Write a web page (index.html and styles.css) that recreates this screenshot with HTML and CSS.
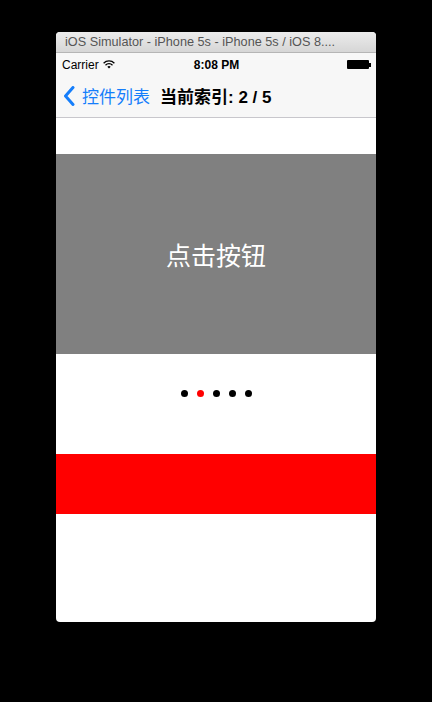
FILE: index.html
```html
<!DOCTYPE html>
<html lang="zh">
<head>
    <meta charset="UTF-8">
    <meta name="viewport" content="width=device-width, initial-scale=1.0">
    <title>当前索引</title>
    <link rel="stylesheet" href="styles.css">
</head>
<body>
    <div class="sim-window">
        <div class="title-bar">iOS Simulator - iPhone 5s - iPhone 5s / iOS 8....</div>

        <div class="status-bar">
            <div class="status-left">
                Carrier
                <svg class="wifi" width="12" height="9" viewBox="0 0 12 9">
                    <path d="M0.6 3.2 A7.6 7.6 0 0 1 11.4 3.2" fill="none" stroke="#000" stroke-width="1.3"/>
                    <path d="M2.5 5.2 A4.8 4.8 0 0 1 9.5 5.2" fill="none" stroke="#000" stroke-width="1.3"/>
                    <path d="M6 8.6 L4.3 6.8 A2.4 2.4 0 0 1 7.7 6.8 Z" fill="#000"/>
                </svg>
            </div>
            <div class="status-time">8:08 PM</div>
            <div class="status-right">
                <span class="battery"></span><span class="battery-nub"></span>
            </div>
        </div>

        <nav class="nav-bar">
            <a href="#" class="back-link">
                <svg width="12" height="20" viewBox="0 0 12 20">
                    <polyline points="10,1.5 2.5,10 10,18.5" fill="none" stroke="#157efb" stroke-width="3" stroke-linecap="round" stroke-linejoin="round"/>
                </svg>
                <span>控件列表</span>
            </a>
            <div class="nav-title">当前索引: 2 / 5</div>
        </nav>

        <div class="content">
            <div class="banner">点击按钮</div>
            <div class="dots">
                <span class="dot"></span>
                <span class="dot active"></span>
                <span class="dot"></span>
                <span class="dot"></span>
                <span class="dot"></span>
            </div>
            <div class="red-band"></div>
        </div>
    </div>
</body>
</html>
```

FILE: styles.css
```css
body {
    margin: 0;
    padding: 0;
    background-color: #000;
    font-family: "Liberation Sans", "Noto Sans CJK SC", sans-serif;
}

.sim-window {
    width: 320px;
    height: 590px;
    margin: 32px 0 0 56px;
    display: flex;
    flex-direction: column;
    background-color: #fff;
    border-radius: 4px;
    overflow: hidden;
}

/* Simulator title bar */
.title-bar {
    height: 21px;
    line-height: 21px;
    padding-left: 9px;
    font-size: 12.7px;
    color: #555;
    background: linear-gradient(#ececec, #d6d6d6);
    border-bottom: 1px solid #b5b5b5;
    box-sizing: border-box;
    white-space: nowrap;
}

/* Status bar */
.status-bar {
    height: 20px;
    display: flex;
    align-items: center;
    justify-content: space-between;
    padding: 3px 5px 0 6px;
    box-sizing: border-box;
    background-color: #f7f7f7;
    font-size: 12px;
    color: #000;
}

.status-left {
    width: 80px;
    display: flex;
    align-items: center;
    gap: 4px;
}

.status-time {
    font-weight: bold;
}

.status-right {
    width: 80px;
    display: flex;
    justify-content: flex-end;
    align-items: center;
}

.battery {
    width: 22px;
    height: 9px;
    background-color: #000;
    border-radius: 1px;
}

.battery-nub {
    width: 2px;
    height: 4px;
    background-color: #000;
}

/* Navigation bar */
.nav-bar {
    height: 43px;
    display: flex;
    align-items: center;
    padding: 1px 0 0 7px;
    background-color: #f7f7f7;
    border-bottom: 1px solid #c8c7cc;
}

.back-link {
    display: flex;
    align-items: center;
    gap: 7px;
    color: #157efb;
    text-decoration: none;
    font-size: 17px;
}

.nav-title {
    margin-left: 10px;
    font-size: 17px;
    font-weight: 600;
    color: #000;
}

/* Content */
.content {
    flex: 1;
    padding-top: 36px;
}

.banner {
    height: 200px;
    display: flex;
    align-items: center;
    justify-content: center;
    background-color: #808080;
    color: #fff;
    font-size: 25px;
}

.dots {
    height: 100px;
    display: flex;
    justify-content: center;
    align-items: flex-start;
    gap: 9px;
    padding-top: 36px;
    box-sizing: border-box;
}

.dot {
    width: 7px;
    height: 7px;
    border-radius: 50%;
    background-color: #000;
}

.dot.active {
    background-color: #ff0000;
}

.red-band {
    height: 60px;
    background-color: #ff0000;
}
```
